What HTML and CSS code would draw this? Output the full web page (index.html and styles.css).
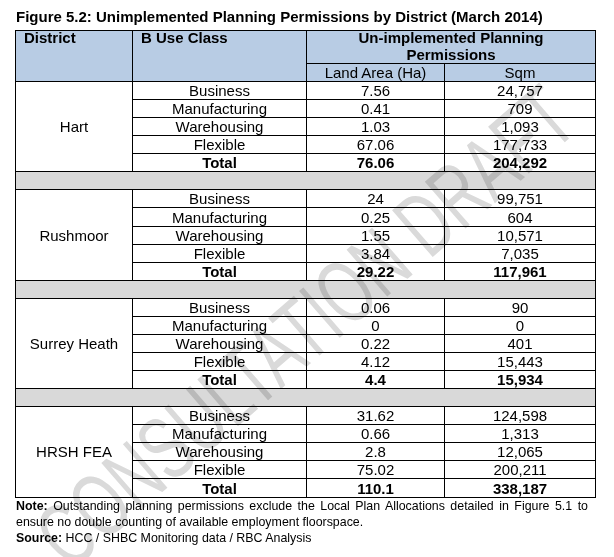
FILE: index.html
```html
<!DOCTYPE html>
<html>
<head>
<meta charset="utf-8">
<link rel="stylesheet" href="styles.css">
</head>
<body>
<div class="page">
  <h1 class="title">Figure 5.2: Unimplemented Planning Permissions by District (March 2014)</h1>
  <table class="pp">
    <colgroup>
      <col class="c1"><col class="c2"><col class="c3"><col class="c4">
    </colgroup>
    <thead>
      <tr class="h1">
        <th rowspan="2" class="left"><span class="hx">District</span></th>
        <th rowspan="2" class="left"><span class="hx">B Use Class</span></th>
        <th colspan="2" class="grp"><span class="hx">Un-implemented Planning<br>Permissions</span></th>
      </tr>
      <tr class="h2">
        <th class="sub">Land Area (Ha)</th>
        <th class="sub">Sqm</th>
      </tr>
    </thead>
    <tbody>
      <tr><td rowspan="5" class="district">Hart</td><td>Business</td><td>7.56</td><td>24,757</td></tr>
      <tr><td>Manufacturing</td><td>0.41</td><td>709</td></tr>
      <tr><td>Warehousing</td><td>1.03</td><td>1,093</td></tr>
      <tr><td>Flexible</td><td>67.06</td><td>177,733</td></tr>
      <tr class="total"><td>Total</td><td>76.06</td><td>204,292</td></tr>
      <tr class="sep"><td colspan="4"></td></tr>

      <tr><td rowspan="5" class="district">Rushmoor</td><td>Business</td><td>24</td><td>99,751</td></tr>
      <tr><td>Manufacturing</td><td>0.25</td><td>604</td></tr>
      <tr><td>Warehousing</td><td>1.55</td><td>10,571</td></tr>
      <tr><td>Flexible</td><td>3.84</td><td>7,035</td></tr>
      <tr class="total"><td>Total</td><td>29.22</td><td>117,961</td></tr>
      <tr class="sep"><td colspan="4"></td></tr>

      <tr><td rowspan="5" class="district">Surrey Heath</td><td>Business</td><td>0.06</td><td>90</td></tr>
      <tr><td>Manufacturing</td><td>0</td><td>0</td></tr>
      <tr><td>Warehousing</td><td>0.22</td><td>401</td></tr>
      <tr><td>Flexible</td><td>4.12</td><td>15,443</td></tr>
      <tr class="total"><td>Total</td><td>4.4</td><td>15,934</td></tr>
      <tr class="sep"><td colspan="4"></td></tr>

      <tr><td rowspan="5" class="district">HRSH FEA</td><td>Business</td><td>31.62</td><td>124,598</td></tr>
      <tr><td>Manufacturing</td><td>0.66</td><td>1,313</td></tr>
      <tr><td>Warehousing</td><td>2.8</td><td>12,065</td></tr>
      <tr><td>Flexible</td><td>75.02</td><td>200,211</td></tr>
      <tr class="total"><td>Total</td><td>110.1</td><td>338,187</td></tr>
    </tbody>
  </table>
  <p class="note"><b>Note:</b> Outstanding planning permissions exclude the Local Plan Allocations detailed in Figure 5.1 to ensure no double counting of available employment floorspace.</p>
  <p class="source"><b>Source:</b> HCC / SHBC Monitoring data / RBC Analysis</p>
  <div class="watermark" aria-hidden="true">CONSULTATION DRAFT</div>
</div>
</body>
</html>
```

FILE: styles.css
```css
html, body {
  margin: 0;
  padding: 0;
  background: #ffffff;
}

.page {
  position: relative;
  width: 614px;
  height: 557px;
  overflow: hidden;
  padding: 8px 0 0 16px;
  box-sizing: border-box;
  font-family: "Liberation Sans", Arial, sans-serif;
  color: #000;
}

.title {
  margin: 0 0 5px 0;
  font-size: 15px;
  line-height: 17px;
  font-weight: bold;
}

.pp {
  border-collapse: collapse;
  table-layout: fixed;
  width: 580px;
  margin-left: -1px;
  font-size: 15px;
  line-height: 17px;
}

.c1 { width: 117px; }
.c2 { width: 174px; }
.c3 { width: 138px; }
.c4 { width: 151px; }

.pp th, .pp td {
  border: 1px solid #000;
  padding: 0;
  text-align: center;
  vertical-align: middle;
}

.pp thead th {
  background: #b8cce4;
}

.pp .h1 th {
  height: 32px;
  vertical-align: top;
  font-weight: bold;
}

.pp .h1 th.left {
  text-align: left;
  padding-left: 8px;
}

.hx {
  display: block;
  margin-top: -2px;
}

.pp .h2 th {
  font-weight: normal;
  height: 17px;
}

.pp tbody td {
  height: 17.09px;
  white-space: nowrap;
}

.pp .total td {
  font-weight: bold;
}

.pp tbody td.district {
  font-weight: normal;
}

.pp .sep td {
  background: #d9d9d9;
  height: 17px;
}

.note, .source {
  margin: 0;
  width: 572px;
  font-size: 12.4px;
  line-height: 16px;
}

.note {
  text-align: justify;
  margin-top: 0;
}

.watermark {
  position: absolute;
  left: 305px;
  top: 327px;
  transform: translate(-50%, -50%) rotate(-41deg) scaleX(0.67);
  font-family: "Liberation Sans", Arial, sans-serif;
  font-size: 90px;
  line-height: 90px;
  white-space: nowrap;
  color: #dadada;
  mix-blend-mode: multiply;
  pointer-events: none;
}
```
